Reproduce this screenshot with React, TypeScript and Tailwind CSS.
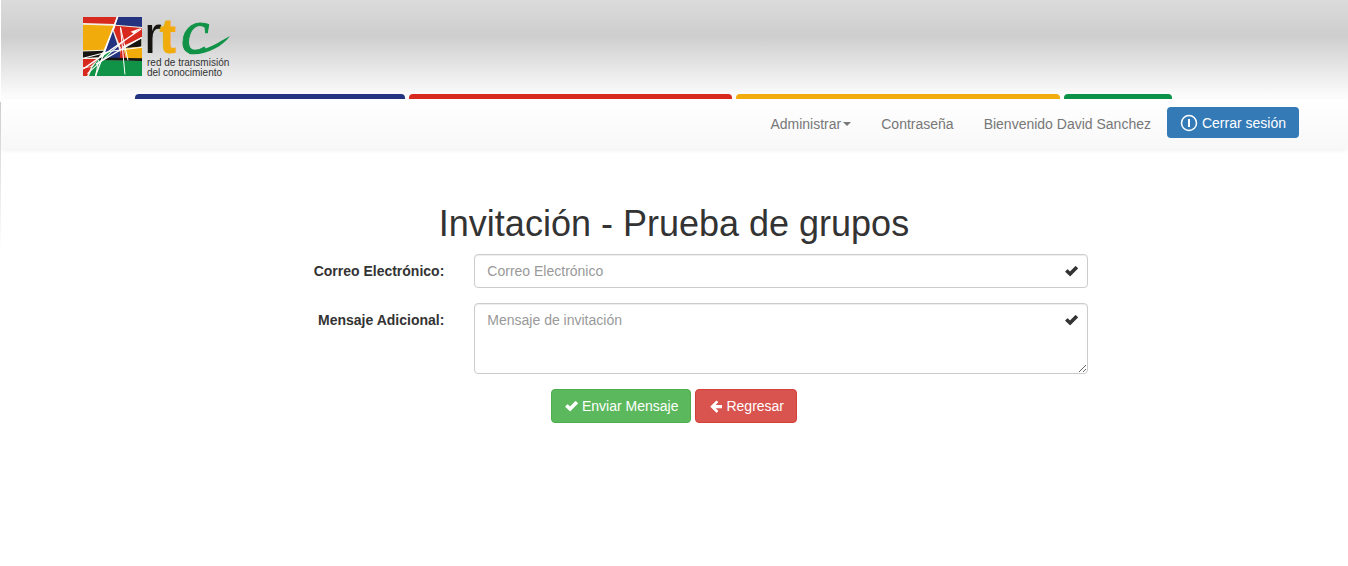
import type { ReactNode } from "react";

function Logo() {
  return (
    <svg viewBox="0 0 150 62" className="h-[62px] w-[150px] overflow-visible" role="img" aria-label="rtc red de transmisión del conocimiento">
      <g transform="scale(0.3352)">
        <rect width="176" height="176" fill="#f4f0e4" />
        <path d="M0 0H100L93 21L0 18Z" fill="#d8291f" />
        <path d="M105 0H176V30L97 23Z" fill="#24337f" />
        <path d="M0 23L91 26L62 98L0 100Z" fill="#f1ac0c" />
        <path d="M97 26L176 33V60L112 90L92 40Z" fill="#d8291f" />
        <path d="M88 38L118 128H58Z" fill="#24337f" />
        <path d="M0 103L62 101L46 120L0 122Z" fill="#171512" />
        <path d="M0 125H46L22 148L0 150Z" fill="#d8291f" />
        <path d="M0 153L24 149L12 176H0Z" fill="#d8291f" />
        <path d="M28 150L46 125L36 176H18Z" fill="#109347" />
        <path d="M48 128L176 130V176H40Z" fill="#109347" />
        <path d="M120 92L174 64V88L138 92Z" fill="#171512" />
        <path d="M122 94L176 89V126L130 127Z" fill="#f1ac0c" />
        <path d="M115 72L129 126H109Z" fill="#d8291f" />
        <path d="M60 113L88 98L72 126H46Z" fill="#109347" />
        <path d="M46 121L176 123V131L46 128Z" fill="#171512" />
        <g stroke="#fff" fill="none" strokeLinecap="round">
          <path d="M103 0L38 174" strokeWidth="4" />
          <path d="M112 32L125 170" strokeWidth="3" />
          <path d="M112 32L134 128" strokeWidth="3" />
          <path d="M2 154L173 36" strokeWidth="4" />
          <path d="M14 168L120 72" strokeWidth="3" />
          <path d="M40 140L174 62" strokeWidth="4" />
          <path d="M0 123L82 102L176 90" strokeWidth="3" />
        </g>
        <path d="M142 44L172 33L152 50Z" fill="#fff" />
      </g>
      <text x="61" y="36" fontFamily="Liberation Sans, sans-serif" fontSize="54" fill="#171512">r</text>
      <text x="77" y="36" fontFamily="Liberation Sans, sans-serif" fontSize="48" fontWeight="bold" fill="#f1ac0c" stroke="#f1ac0c">t</text>
      <text x="98" y="36" fontFamily="Liberation Serif, serif" fontSize="64" fontStyle="italic" fill="#109347" stroke="#109347">c</text>
      <path d="M106 33C122 36 135 25 147 19C139 30 122 39 106 37Z" fill="#109347" />
      <text x="64" y="49" fontFamily="Liberation Sans, sans-serif" fontSize="10" fill="#333">red de transmisión</text>
      <text x="64" y="59" fontFamily="Liberation Sans, sans-serif" fontSize="10" fill="#333">del conocimiento</text>
    </svg>
  );
}

function CheckIcon() {
  return (
    <svg viewBox="0 0 14 14" className="size-3.5 shrink-0" fill="currentColor" aria-hidden="true">
      <path d="M1.4 7.2L3.2 5.4Q3.6 5.1 4 5.5L6 7.4L11.2 2.2Q11.6 1.8 12 2.2L13.8 4Q14.2 4.4 13.8 4.8L6.6 12Q6.1 12.4 5.7 12L1.4 7.9Q1 7.5 1.4 7.2Z" />
    </svg>
  );
}

function ArrowIcon() {
  return (
    <svg viewBox="0 0 14 14" className="size-3.5 shrink-0" fill="currentColor" aria-hidden="true">
      <path d="M2.6 7.3L8.1 1.7Q8.5 1.3 8.9 1.7L10 2.8Q10.4 3.2 10 3.6L7.7 5.9H14V9.3H7.7L10 11.6Q10.4 12 10 12.4L8.9 13.5Q8.5 13.9 8.1 13.5L2.6 8Q2.2 7.6 2.6 7.3Z" />
    </svg>
  );
}

function PowerIcon() {
  return (
    <svg viewBox="0 0 18 18" className="size-[18px] shrink-0" fill="none" stroke="currentColor" aria-hidden="true">
      <circle cx="9" cy="9" r="7.5" strokeWidth="1.5" />
      <path d="M9 5V13" strokeWidth="2" />
    </svg>
  );
}

function Field({ id, label, children }: { id: string; label: string; children: ReactNode }) {
  return (
    <div className="mb-[15px] grid grid-cols-12">
      <label htmlFor={id} className="col-span-3 pt-[7px] pr-[15px] text-right font-bold">
        {label}
      </label>
      <div className="relative col-span-9 mx-[15px]">
        {children}
        <span className="pointer-events-none absolute top-0 right-0 flex h-[34px] w-[34px] items-center justify-center">
          <CheckIcon />
        </span>
      </div>
    </div>
  );
}

const control =
  "block w-full rounded border border-[#ccc] bg-white py-1.5 pr-[42px] pl-3 text-sm leading-5 text-[#555] shadow-[inset_0_1px_1px_rgba(0,0,0,0.075)] outline-none placeholder:text-[#999] focus:border-[#66afe9]";

export default function App() {
  return (
    <div className="relative bg-white font-['Liberation_Sans',Arial,sans-serif] text-sm leading-5 text-[#333]">
      <div className="absolute top-[102px] left-0 h-[150px] w-px bg-linear-to-b from-[#ccc] to-white" />
      <header className="ml-px flex h-[99px] flex-col justify-between bg-[linear-gradient(to_bottom,#dbdbdb_0%,#cecece_36%,#fbfbfb_96%,#fff_100%)]">
        <a href="#inicio" className="ml-[82px] w-[150px] pt-[17px]">
          <Logo />
        </a>
        <div className="-ml-px flex h-[5px] gap-1 pl-[10%]">
          <div className="w-[22.3%] rounded-t bg-[#22337f]" />
          <div className="w-[26.6%] rounded-t bg-[#d8291f]" />
          <div className="w-[26.7%] rounded-t bg-[#f1ac0c]" />
          <div className="w-[8.9%] rounded-t bg-[#0b9247]" />
        </div>
      </header>
      <nav className="ml-px flex h-[50px] items-start justify-end rounded bg-linear-to-b from-white to-[#f8f8f8] pr-[49px] shadow-[0_1px_5px_rgba(0,0,0,0.075)]">
        <button type="button" className="flex items-center gap-0.5 px-[15px] py-[15px] text-[#777]">
          Administrar
          <svg viewBox="0 0 8 4" className="h-1 w-2" fill="currentColor" aria-hidden="true">
            <path d="M0 0H8L4 4Z" />
          </svg>
        </button>
        <a href="#contrasena" className="px-[15px] py-[15px] text-[#777]">Contraseña</a>
        <a href="#perfil" className="py-[15px] pr-4 pl-[15px] text-[#777]">Bienvenido David Sanchez</a>
        <button type="button" className="mt-2 flex h-[31px] items-center gap-1 rounded bg-[#337ab7] px-[13px] text-white">
          <PowerIcon />
          Cerrar sesión
        </button>
      </nav>
      <main className="px-[30px] pt-[55px] pb-10">
        <form className="mx-auto w-2/3" onSubmit={(e) => e.preventDefault()}>
          <h1 className="mb-2.5 text-center text-4xl leading-10">Invitación - Prueba de grupos</h1>
          <Field id="correo" label="Correo Electrónico:">
            <input id="correo" type="email" placeholder="Correo Electrónico" className={`${control} h-[34px]`} />
          </Field>
          <Field id="mensaje" label="Mensaje Adicional:">
            <textarea id="mensaje" placeholder="Mensaje de invitación" className={`${control} h-[71px] resize-y`} />
          </Field>
          <div className="flex justify-center gap-1">
            <button type="submit" className="flex items-center gap-1 rounded border border-[#4cae4c] bg-[#5cb85c] px-3 py-1.5 text-white">
              <CheckIcon />
              Enviar Mensaje
            </button>
            <button type="button" className="flex items-center gap-1 rounded border border-[#d43f3a] bg-[#d9534f] px-3 py-1.5 text-white">
              <ArrowIcon />
              Regresar
            </button>
          </div>
        </form>
      </main>
    </div>
  );
}
